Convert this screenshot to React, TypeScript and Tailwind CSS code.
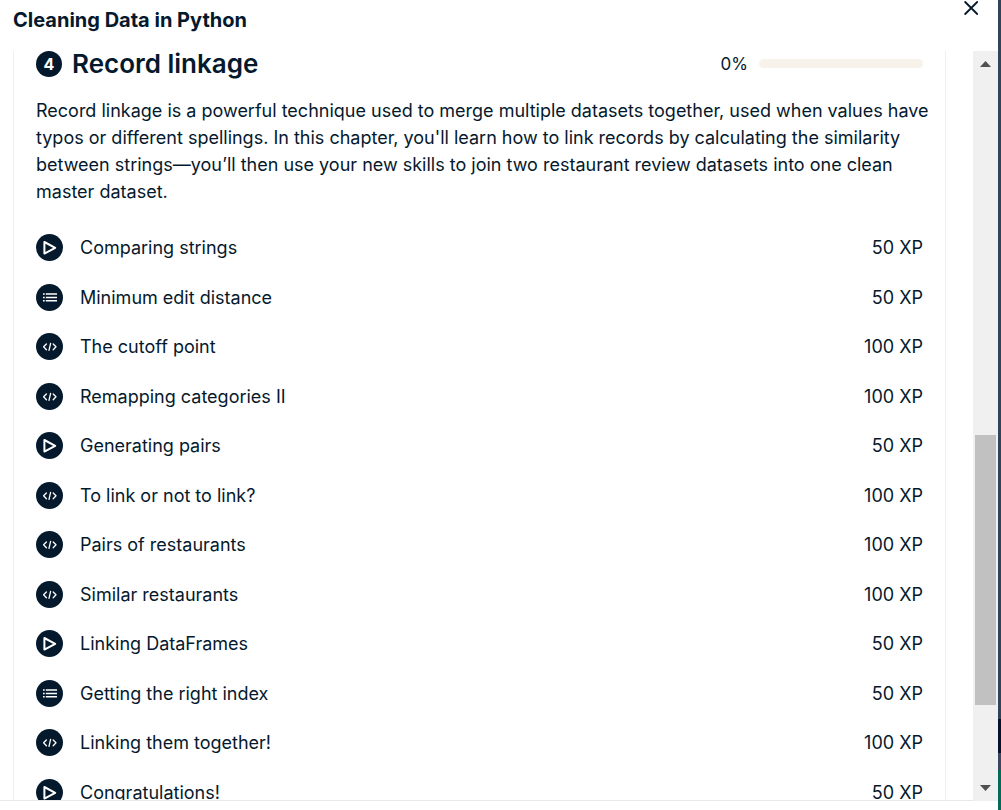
type Kind = 'video' | 'choice' | 'code';

const lessons: { title: string; kind: Kind; xp: number }[] = [
  { title: 'Comparing strings', kind: 'video', xp: 50 },
  { title: 'Minimum edit distance', kind: 'choice', xp: 50 },
  { title: 'The cutoff point', kind: 'code', xp: 100 },
  { title: 'Remapping categories II', kind: 'code', xp: 100 },
  { title: 'Generating pairs', kind: 'video', xp: 50 },
  { title: 'To link or not to link?', kind: 'code', xp: 100 },
  { title: 'Pairs of restaurants', kind: 'code', xp: 100 },
  { title: 'Similar restaurants', kind: 'code', xp: 100 },
  { title: 'Linking DataFrames', kind: 'video', xp: 50 },
  { title: 'Getting the right index', kind: 'choice', xp: 50 },
  { title: 'Linking them together!', kind: 'code', xp: 100 },
  { title: 'Congratulations!', kind: 'video', xp: 50 },
];

function LessonIcon({ kind }: { kind: Kind }) {
  return (
    <svg viewBox="0 0 27 27" className="size-[27px] shrink-0" fill="none" aria-hidden="true">
      <circle cx="13.5" cy="13.5" r="13.5" fill="#05192d" />
      {kind === 'video' && (
        <path d="M8.4 8v11.6l10.8-5.8z" stroke="#fff" strokeWidth="2" strokeLinejoin="round" />
      )}
      {kind === 'choice' && (
        <path
          d="M7 10h1.7M7 13.4h1.7M7 16.8h1.7M9.8 10H21M9.8 13.4H21M9.8 16.8H21"
          stroke="#fff"
          strokeWidth="1.5"
        />
      )}
      {kind === 'code' && (
        <path
          d="M10.4 11 7.6 13.8l2.8 2.9M17.2 11l2.8 2.8-2.8 2.9M14.6 10.4l-1.6 7"
          stroke="#fff"
          strokeWidth="1.3"
          strokeLinecap="round"
          strokeLinejoin="round"
        />
      )}
    </svg>
  );
}

function ScrollRail() {
  return (
    <div className="flex w-[25px] shrink-0 flex-col items-center bg-[#f0f0f0]" aria-hidden="true">
      <svg viewBox="0 0 25 25" className="size-[25px] shrink-0">
        <path d="M7 16h11l-5.5-6z" fill="#505050" />
      </svg>
      <div className="grow-[359]" />
      <div className="w-[21px] grow-[270] bg-[#c1c1c1]" />
      <div className="grow-[71]" />
      <svg viewBox="0 0 25 25" className="size-[25px] shrink-0">
        <path d="M7 9h11l-5.5 6z" fill="#505050" />
      </svg>
    </div>
  );
}

export default function App() {
  return (
    <div className="flex h-screen overflow-hidden bg-white font-['Inter',sans-serif] text-[18px] text-[#05192d]">
      <div className="flex min-w-0 flex-1 flex-col pb-[9px]">
        <header className="flex h-[51px] shrink-0 items-start justify-between pr-5 pl-[13px]">
          <h1 className="pt-1.5 text-[20px] leading-7 font-bold">Cleaning Data in Python</h1>
          <button type="button" aria-label="Close" className="pt-px">
            <svg viewBox="0 0 14 14" className="size-3.5" aria-hidden="true">
              <path d="M1.2 1l12 12M13.2 1l-12 12" stroke="#05192d" strokeWidth="1.8" strokeLinecap="round" />
            </svg>
          </button>
        </header>

        <div className="flex min-h-0 flex-1">
          <div className="min-w-0 flex-1 overflow-hidden border-b border-[#e8e8e8] pr-[27px] pl-[13px]">
            <main className="border-x border-[#efefef] px-[22px]">
              <div className="flex h-[25px] items-center">
                <span className="mr-2.5 flex size-[26px] items-center justify-center rounded-full bg-[#05192d] text-[16px] leading-[26px] font-bold text-white">
                  4
                </span>
                <h2 className="flex-1 text-[26px] leading-[26px] font-semibold">Record linkage</h2>
                <label htmlFor="chapter-progress" className="mr-[11px] text-[17px] leading-[26px]">
                  0%
                </label>
                <progress
                  id="chapter-progress"
                  value={0}
                  max={100}
                  className="h-[9px] w-[164px] appearance-none overflow-hidden rounded-full bg-[#f7f3eb] [&::-webkit-progress-bar]:bg-[#f7f3eb]"
                />
              </div>

              <p className="mt-[21px] leading-[27px] whitespace-nowrap">
                Record linkage is a powerful technique used to merge multiple datasets together, used when values have<br />
                typos or different spellings. In this chapter, you'll learn how to link records by calculating the similarity<br />
                between strings—you’ll then use your new skills to join two restaurant review datasets into one clean<br />
                master dataset.
              </p>

              <ul className="mt-[29px]">
                {lessons.map((lesson) => (
                  <li key={lesson.title} className="odd:h-[50px] even:h-[49px]">
                    <a href="#lesson" className="flex items-start">
                      <LessonIcon kind={lesson.kind} />
                      <span className="ml-[17px] flex-1 leading-7">{lesson.title}</span>
                      <span className="leading-7">{lesson.xp} XP</span>
                    </a>
                  </li>
                ))}
              </ul>
            </main>
          </div>
          <ScrollRail />
        </div>
      </div>

      <div className="flex w-[3px] shrink-0 flex-col bg-[#30435a]">
        <div className="grow-[719]" />
        <div className="grow-[34] bg-[#03122e]" />
        <div className="grow-[17] bg-[#3a4763]" />
        <div className="grow-[40] bg-[#046a58]" />
      </div>
    </div>
  );
}
